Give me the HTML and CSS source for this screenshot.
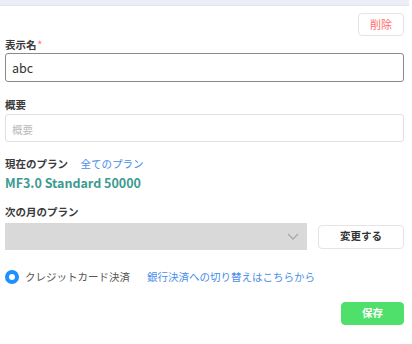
FILE: index.html
```html
<!DOCTYPE html>
<html lang="ja">
<head>
  <meta charset="UTF-8">
  <meta name="viewport" content="width=device-width, initial-scale=1.0">
  <title>プラン編集</title>
  <link rel="stylesheet" href="styles.css">
</head>
<body>
  <div class="topbar"></div>

  <div class="form">
    <div class="actions-top">
      <button class="btn btn-danger">削除</button>
    </div>

    <label class="label">表示名<span class="req">*</span></label>
    <input class="input input-active" type="text" value="abc">

    <label class="label label-next">概要</label>
    <input class="input" type="text" placeholder="概要">

    <div class="label label-plan">現在のプラン <a class="link link-gap" href="#">全てのプラン</a></div>
    <div class="plan-name">MF3.0 Standard 50000</div>

    <label class="label label-month">次の月のプラン</label>
    <div class="row">
      <div class="select">
        <svg class="chevron" width="12" height="7" viewBox="0 0 12 7"><path d="M1 1l5 5 5-5" fill="none" stroke="#a8a8a8" stroke-width="1.3"/></svg>
      </div>
      <button class="btn btn-plain">変更する</button>
    </div>

    <div class="pay-row">
      <span class="radio"></span>
      <span class="pay-text">クレジットカード決済</span>
      <a class="link" href="#">銀行決済への切り替えはこちらから</a>
    </div>

    <div class="actions-bottom">
      <button class="btn btn-save">保存</button>
    </div>
  </div>
</body>
</html>
```

FILE: styles.css
```css
body {
  margin: 0;
  font-family: "Noto Sans CJK JP", "Noto Sans", sans-serif;
  background: white;
  color: #333;
}
.topbar {
  width: 409px;
  height: 5px;
  background: #eceef6;
  border-bottom: 1px solid #e2e4ee;
}
.form {
  padding: 7px 8px 0 5px;
}
.actions-top {
  display: flex;
  justify-content: flex-end;
  margin-bottom: 2px;
}
.btn {
  font-family: inherit;
  font-size: 10.5px;
  background: white;
  border: 1px solid #e4e4e4;
  border-radius: 4px;
  cursor: pointer;
  line-height: 1;
  padding: 0;
}
.btn-danger {
  color: #ff6b6b;
  width: 46px;
  height: 23px;
  font-size: 11px;
}
.label {
  display: block;
  font-size: 10.5px;
  font-weight: bold;
  color: #3a3a3a;
  line-height: 14px;
  margin-bottom: 1px;
}
.label-next {
  margin-top: 16px;
  margin-bottom: 2px;
}
.label-plan {
  margin-top: 15px;
}
.label-month {
  margin-top: 14px;
  margin-bottom: 4px;
}
.req {
  color: #ff8080;
  font-size: 9px;
  vertical-align: top;
  margin-left: 1px;
}
.input {
  display: block;
  box-sizing: border-box;
  width: 399px;
  height: 28px;
  padding: 0 6px;
  font-family: inherit;
  font-size: 12.5px;
  color: #333;
  border: 1px solid #e0e0e0;
  border-radius: 3px;
  outline: none;
}
.input-active {
  height: 29px;
  border-color: #8a8a8a;
}
.input::placeholder {
  color: #bbb;
  font-size: 10.5px;
}
.link {
  color: #4a8eea;
  text-decoration: none;
  font-weight: normal;
  font-size: 10.5px;
}
.link-gap {
  margin-left: 10px;
}
.plan-name {
  font-size: 12.5px;
  font-weight: bold;
  color: #3c9a91;
  line-height: 16px;
  margin-top: 4px;
}
.row {
  display: flex;
  align-items: center;
  gap: 11px;
}
.select {
  box-sizing: border-box;
  width: 302px;
  height: 27px;
  background: #d9d9d9;
  display: flex;
  align-items: center;
  justify-content: flex-end;
  padding-right: 8px;
}
.btn-plain {
  width: 86px;
  height: 24px;
  font-weight: bold;
  color: #333;
}
.pay-row {
  display: flex;
  align-items: center;
  margin-top: 19px;
  font-size: 10.5px;
  line-height: 16px;
}
.radio {
  box-sizing: border-box;
  width: 14px;
  height: 14px;
  border: 4px solid #1e90ff;
  border-radius: 50%;
  background: white;
  margin-right: 6px;
}
.pay-text {
  color: #555;
  margin-right: 17px;
}
.actions-bottom {
  display: flex;
  justify-content: flex-end;
  margin-top: 17px;
}
.btn-save {
  width: 63px;
  height: 23px;
  background: #4fe06b;
  border-color: #4fe06b;
  color: white;
  font-weight: bold;
}
```
